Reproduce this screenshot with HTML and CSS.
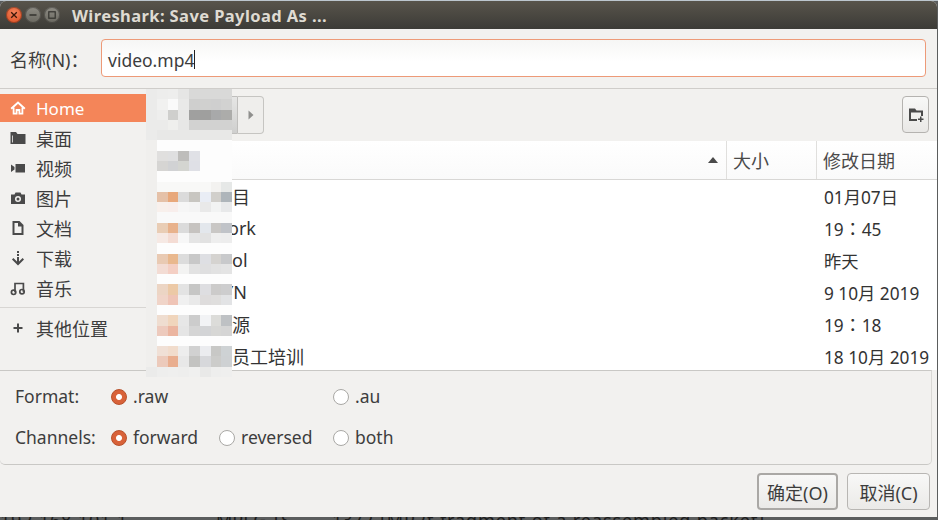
FILE: index.html
```html
<!DOCTYPE html>
<html lang="zh">
<head>
<meta charset="utf-8">
<title>Wireshark: Save Payload As ...</title>
<link rel="stylesheet" href="styles.css">
</head>
<body>
<div class="top-edge"></div>
<div class="window">
  <header class="titlebar">
    <div class="controls">
      <span class="ctl ctl-close"><svg viewBox="0 0 8 8" width="8" height="8"><path d="M1.2 1.2 6.8 6.8M6.8 1.2 1.2 6.8" stroke="#3a1608" stroke-width="1.3"/></svg></span>
      <span class="ctl ctl-min"><svg viewBox="0 0 8 8" width="8" height="8"><path d="M0.5 4h7" stroke="#33322e" stroke-width="1.4"/></svg></span>
      <span class="ctl ctl-max"><svg viewBox="0 0 8 8" width="8" height="8"><rect x="0.8" y="0.8" width="6.4" height="6.4" fill="none" stroke="#33322e" stroke-width="1.2"/></svg></span>
    </div>
    <div class="title">Wireshark: Save Payload As ...</div>
  </header>

  <div class="name-row">
    <label class="name-label">名称(N)：</label>
    <div class="name-input">video.mp4<span class="caret"></span></div>
  </div>

  <div class="browser">
    <nav class="sidebar">
      <a class="place place-active">
        <svg class="ico" viewBox="0 0 16 16"><path d="M1.200 8.800 8 2.500l6.800 6.300" fill="none" stroke="#fff" stroke-width="2"/><path d="M3.600 7.500V13.600H6.600V10H9.400V13.600H12.400V7.500" fill="none" stroke="#fff" stroke-width="1.800"/></svg>
        <span>Home</span>
      </a>
      <a class="place">
        <svg class="ico" viewBox="0 0 16 16"><path d="M0.500 2h5.500l1.500 2H15.500v10H.5zM2.200 5.500V12.500H3V5.500z" fill="#4a4a4a" fill-rule="evenodd"/></svg>
        <span>桌面</span>
      </a>
      <a class="place">
        <svg class="ico" viewBox="0 0 16 16"><path d="M5.500 4H15v8.500H5.500zM1 4.500 4.500 7v2.500L1 12z" fill="#4a4a4a"/></svg>
        <span>视频</span>
      </a>
      <a class="place">
        <svg class="ico" viewBox="0 0 16 16"><path d="M5.500 2.500h5l1 2h3.500v9.500H1V4.500h3.500zM8 6a3 3 0 1 0 0 6 3 3 0 0 0 0-6zM8 7.500a1.500 1.500 0 1 1 0 3 1.500 1.500 0 0 1 0-3z" fill="#4a4a4a" fill-rule="evenodd"/></svg>
        <span>图片</span>
      </a>
      <a class="place">
        <svg class="ico" viewBox="0 0 16 16"><path d="M2.500 1H9.500L13.500 5V15H2.500zM4.500 3V13H11.500V6.500H8V3z" fill="#4a4a4a" fill-rule="evenodd"/></svg>
        <span>文档</span>
      </a>
      <a class="place">
        <svg class="ico" viewBox="0 0 16 16"><path d="M7 1h2v2H7zM7 4h2v2H7z" fill="#4a4a4a"/><path d="M8 7v6.500M2.700 8.800 8 14l5.300-5.200" fill="none" stroke="#4a4a4a" stroke-width="2"/></svg>
        <span>下载</span>
      </a>
      <a class="place">
        <svg class="ico" viewBox="0 0 16 16"><circle cx="3.600" cy="12.300" r="2.200" fill="none" stroke="#4a4a4a" stroke-width="1.700"/><circle cx="12" cy="11.700" r="2.200" fill="none" stroke="#4a4a4a" stroke-width="1.700"/><path d="M5 12.300V3.500h8.400v8.200" fill="none" stroke="#4a4a4a" stroke-width="1.700"/></svg>
        <span>音乐</span>
      </a>
      <div class="sidebar-sep"></div>
      <a class="place">
        <svg class="ico" viewBox="0 0 16 16"><path d="M7 3.500h2V7h3.500v2H9v3.500H7V9H3.500V7H7z" fill="#4a4a4a"/></svg>
        <span>其他位置</span>
      </a>
    </nav>

    <section class="files">
      <div class="toolbar">
        <div class="pathbar">
          <span class="crumb"></span>
          <span class="crumb-next"><svg viewBox="0 0 6 10" width="6" height="10"><path d="M0.500 0.500 5.500 5 0.500 9.500z" fill="#8f8f8d"/></svg></span>
        </div>
        <button class="icon-btn" type="button">
          <svg viewBox="0 0 16 16" width="16" height="16"><path d="M1 1.500h6l1.500 2H15V9h-2V5.500H3v6.500h6v2H1z" fill="#4a4a4a"/><path d="M12 9.500h1.500V11.500H15.500V13H13.500v2H12v-2H10V11.500h2z" fill="#4a4a4a"/></svg>
        </button>
      </div>
      <div class="table">
        <div class="thead cols">
          <div class="th th-name"><svg viewBox="0 0 12 6" width="12" height="6"><path d="M6 0 11 6H1z" fill="#4a4a4a"/></svg></div>
          <div class="th">大小</div>
          <div class="th">修改日期</div>
        </div>
        <div class="row cols"><div class="cell-name">目</div><div></div><div class="cell-date">01月07日</div></div>
        <div class="row cols"><div class="cell-name cell-name-ork">ork</div><div></div><div class="cell-date">19<span class="colon">：</span>45</div></div>
        <div class="row cols"><div class="cell-name">ol</div><div></div><div class="cell-date">昨天</div></div>
        <div class="row cols"><div class="cell-name cell-name-under">YN</div><div></div><div class="cell-date">9 10月 2019</div></div>
        <div class="row cols"><div class="cell-name">源</div><div></div><div class="cell-date">19<span class="colon">：</span>18</div></div>
        <div class="row cols"><div class="cell-name">员工培训</div><div></div><div class="cell-date">18 10月 2019</div></div>
      </div>
    </section>

    <svg class="mosaic" viewBox="0 0 8 28" preserveAspectRatio="none" shape-rendering="crispEdges" aria-hidden="true">
      <rect x="0" y="0" width="1" height="5" fill="#ebebea"/>
      <rect x="0" y="5" width="1" height="22" fill="#f0efed"/>
      <rect x="1" y="5" width="7" height="22" fill="#fdfdfd"/>
      <rect x="1" y="0" width="1" height="1" fill="#ededec"/><rect x="2" y="0" width="1" height="1" fill="#eeeeed"/><rect x="3" y="0" width="1" height="1" fill="#e6e6e5"/><rect x="4" y="0" width="4" height="1" fill="#d9d9d8"/>
      <rect x="1" y="1" width="1" height="1" fill="#f1f1f0"/><rect x="2" y="1" width="1" height="1" fill="#fafafa"/><rect x="3" y="1" width="1" height="1" fill="#e9e9e8"/><rect x="4" y="1" width="1" height="1" fill="#cfcfce"/><rect x="5" y="1" width="1" height="1" fill="#d0d0cf"/><rect x="6" y="1" width="1" height="1" fill="#cfcfcf"/><rect x="7" y="1" width="1" height="1" fill="#d2d2d1"/>
      <rect x="1" y="2" width="1" height="1" fill="#eeeeed"/><rect x="2" y="2" width="1" height="1" fill="#cfcfcd"/><rect x="3" y="2" width="1" height="1" fill="#e8e8e7"/><rect x="4" y="2" width="1" height="1" fill="#a0a09f"/><rect x="5" y="2" width="1" height="1" fill="#9f9f9e"/><rect x="6" y="2" width="1" height="1" fill="#a8a9aa"/><rect x="7" y="2" width="1" height="1" fill="#acacaa"/>
      <rect x="1" y="3" width="1" height="1" fill="#ebebea"/><rect x="2" y="3" width="1" height="1" fill="#efefed"/><rect x="3" y="3" width="1" height="1" fill="#e7e7e6"/><rect x="4" y="3" width="4" height="1" fill="#d2d2d1"/>
      <rect x="1" y="4" width="7" height="1" fill="#e8e8e7"/>
      <rect x="1" y="6" width="1" height="1" fill="#e0dfde"/><rect x="2" y="6" width="1" height="1" fill="#dfdfe0"/><rect x="3" y="6" width="1" height="1" fill="#bebdbb"/><rect x="4" y="6" width="1" height="1" fill="#e0e1e6"/>
      <rect x="1" y="7" width="1" height="1" fill="#d6d5d3"/><rect x="2" y="7" width="1" height="1" fill="#d1d2d4"/><rect x="3" y="7" width="1" height="1" fill="#d4d5d1"/><rect x="4" y="7" width="1" height="1" fill="#dfe0e6"/>
      <rect x="1" y="9" width="5" height="1" fill="#f8f8f7"/><rect x="6" y="9" width="1" height="1" fill="#f3f2f0"/><rect x="7" y="9" width="1" height="1" fill="#e6e8e7"/>
      <rect x="1" y="10" width="1" height="1" fill="#e5c1a8"/><rect x="2" y="10" width="1" height="1" fill="#e8a87b"/><rect x="3" y="10" width="1" height="1" fill="#dbdbdb"/><rect x="4" y="10" width="1" height="1" fill="#c8c6c1"/><rect x="5" y="10" width="1" height="1" fill="#e9edf5"/><rect x="6" y="10" width="1" height="1" fill="#d1cfcb"/><rect x="7" y="10" width="1" height="1" fill="#aeb5ba"/>
      <rect x="1" y="11" width="1" height="1" fill="#f8f0ec"/><rect x="2" y="11" width="1" height="1" fill="#f8eeec"/><rect x="3" y="11" width="1" height="1" fill="#f6f6f6"/><rect x="4" y="11" width="1" height="1" fill="#f4f4f4"/><rect x="5" y="11" width="1" height="1" fill="#e9e9e9"/><rect x="6" y="11" width="1" height="1" fill="#f2f3f3"/><rect x="7" y="11" width="1" height="1" fill="#e8e9ea"/>
      <rect x="1" y="12" width="7" height="1" fill="#f9f9f9"/>
      <rect x="1" y="13" width="1" height="1" fill="#e9cdb5"/><rect x="2" y="13" width="1" height="1" fill="#e8b28c"/><rect x="3" y="13" width="1" height="1" fill="#dbdbdb"/><rect x="4" y="13" width="1" height="1" fill="#c6c3c0"/><rect x="5" y="13" width="1" height="1" fill="#e3e7ec"/><rect x="6" y="13" width="1" height="1" fill="#c9c7c5"/><rect x="7" y="13" width="1" height="1" fill="#c0c3c8"/>
      <rect x="1" y="14" width="1" height="1" fill="#f6e9e4"/><rect x="2" y="14" width="1" height="1" fill="#f4dcd4"/><rect x="3" y="14" width="1" height="1" fill="#f7f7f7"/><rect x="4" y="14" width="1" height="1" fill="#e5e5e5"/><rect x="5" y="14" width="1" height="1" fill="#e2e2e2"/><rect x="6" y="14" width="1" height="1" fill="#eeeeee"/><rect x="7" y="14" width="1" height="1" fill="#ededed"/>
      <rect x="1" y="16" width="1" height="1" fill="#e9cab3"/><rect x="2" y="16" width="1" height="1" fill="#e9b88e"/><rect x="3" y="16" width="1" height="1" fill="#dcdcdc"/><rect x="4" y="16" width="1" height="1" fill="#c8c8c8"/><rect x="5" y="16" width="1" height="1" fill="#dedfe3"/><rect x="6" y="16" width="1" height="1" fill="#d5d3d0"/><rect x="7" y="16" width="1" height="1" fill="#c8c9cb"/>
      <rect x="1" y="17" width="1" height="1" fill="#f3dcd4"/><rect x="2" y="17" width="1" height="1" fill="#f4cfc4"/><rect x="3" y="17" width="1" height="1" fill="#f3f3f2"/><rect x="4" y="17" width="1" height="1" fill="#e2e2e2"/><rect x="5" y="17" width="1" height="1" fill="#dfdfe0"/><rect x="6" y="17" width="1" height="1" fill="#e2e2e2"/><rect x="7" y="17" width="1" height="1" fill="#e4e4e4"/>
      <rect x="1" y="19" width="1" height="1" fill="#ecd5c4"/><rect x="2" y="19" width="1" height="1" fill="#ecc9a6"/><rect x="3" y="19" width="1" height="1" fill="#e3e3e3"/><rect x="4" y="19" width="1" height="1" fill="#c6c6c5"/><rect x="5" y="19" width="1" height="1" fill="#dedee1"/><rect x="6" y="19" width="1" height="1" fill="#cccbca"/><rect x="7" y="19" width="1" height="1" fill="#cdcdce"/>
      <rect x="1" y="20" width="1" height="1" fill="#f0d4c8"/><rect x="2" y="20" width="1" height="1" fill="#efc4b6"/><rect x="3" y="20" width="1" height="1" fill="#f0f0f0"/><rect x="4" y="20" width="1" height="1" fill="#e9e9e9"/><rect x="5" y="20" width="1" height="1" fill="#dedcdc"/><rect x="6" y="20" width="1" height="1" fill="#dfdedd"/><rect x="7" y="20" width="1" height="1" fill="#e2e3e5"/>
      <rect x="1" y="22" width="1" height="1" fill="#efddd0"/><rect x="2" y="22" width="1" height="1" fill="#f0d5bc"/><rect x="3" y="22" width="1" height="1" fill="#e7e7e7"/><rect x="4" y="22" width="1" height="1" fill="#cccccc"/><rect x="5" y="22" width="1" height="1" fill="#f2f3f5"/><rect x="6" y="22" width="1" height="1" fill="#dcdcd9"/><rect x="7" y="22" width="1" height="1" fill="#bec1c4"/>
      <rect x="1" y="23" width="1" height="1" fill="#edcabd"/><rect x="2" y="23" width="1" height="1" fill="#ebb5a0"/><rect x="3" y="23" width="1" height="1" fill="#e5e5e5"/><rect x="4" y="23" width="1" height="1" fill="#d5d5d5"/><rect x="5" y="23" width="1" height="1" fill="#d3d4d6"/><rect x="6" y="23" width="1" height="1" fill="#d7d7d5"/><rect x="7" y="23" width="1" height="1" fill="#d5d5d5"/>
      <rect x="1" y="25" width="1" height="1" fill="#f0e0d6"/><rect x="2" y="25" width="1" height="1" fill="#f1dccc"/><rect x="3" y="25" width="1" height="1" fill="#ededed"/><rect x="4" y="25" width="1" height="1" fill="#d1d1d1"/><rect x="5" y="25" width="1" height="1" fill="#ebecef"/><rect x="6" y="25" width="1" height="1" fill="#c8c8c6"/><rect x="7" y="25" width="1" height="1" fill="#ced2d4"/>
      <rect x="1" y="26" width="1" height="1" fill="#eccabb"/><rect x="2" y="26" width="1" height="1" fill="#e9ae8f"/><rect x="3" y="26" width="1" height="1" fill="#e8e8e8"/><rect x="4" y="26" width="1" height="1" fill="#c3c3c1"/><rect x="5" y="26" width="1" height="1" fill="#d7d8db"/><rect x="6" y="26" width="1" height="1" fill="#ccccca"/><rect x="7" y="26" width="1" height="1" fill="#ced1d3"/>
      <rect x="0" y="27" width="1" height="1" fill="#ebebea"/><rect x="1" y="27" width="1" height="1" fill="#eeeeed"/><rect x="2" y="27" width="1" height="1" fill="#efefee"/><rect x="3" y="27" width="1" height="1" fill="#eeeeed"/><rect x="4" y="27" width="1" height="1" fill="#f0f0ef"/><rect x="5" y="27" width="1" height="1" fill="#e9e9e8"/><rect x="6" y="27" width="1" height="1" fill="#eeeeed"/><rect x="7" y="27" width="1" height="1" fill="#efefee"/>
    </svg>
  </div>

  <div class="options">
    <div class="opt-label">Format:</div>
    <label class="radio"><span class="dot dot-on"></span>.raw</label>
    <span></span>
    <label class="radio"><span class="dot"></span>.au</label>
    <div class="opt-label">Channels:</div>
    <label class="radio"><span class="dot dot-on"></span>forward</label>
    <label class="radio"><span class="dot"></span>reversed</label>
    <label class="radio"><span class="dot"></span>both</label>
  </div>

  <footer class="actions">
    <button class="btn btn-default" type="button">确定(O)</button>
    <button class="btn" type="button">取消(C)</button>
  </footer>
</div>
<div class="behind">
  <div class="behind-row">
    <span class="b-ip">192.168.101.1</span>
    <span class="b-proto">MPEG TS</span>
    <span class="b-len">1372</span>
    <span class="b-info">[MP2t fragment of a reassembled packet]</span>
  </div>
</div>
</body>
</html>
```
FILE: styles.css
```css
* { box-sizing: border-box; }
html, body { margin: 0; height: 520px; overflow: hidden; }
body {
  background: #5b5d5d;
  font-family: "Noto Sans", "Noto Sans CJK SC", sans-serif;
  font-size: 18px;
  color: #3d3d3d;
}
.top-edge { height: 1px; background: #bcc6ce; }
.window {
  width: 937px;
  height: 516px;
  background: #f2f1ef;
  border-radius: 6px 6px 0 0;
  display: flex;
  flex-direction: column;
  overflow: hidden;
  position: relative;
}

/* title bar */
.titlebar {
  height: 28px;
  flex: none;
  display: flex;
  align-items: center;
  padding-left: 6px;
  background: linear-gradient(#58544b, #3c3b37);
}
.controls { display: flex; gap: 3px; align-items: center; width: 66px; }
.ctl {
  width: 16px; height: 16px; border-radius: 50%;
  display: flex; align-items: center; justify-content: center;
  box-shadow: inset 0 0 0 1px rgba(0,0,0,.3);
}
.ctl-close { background: radial-gradient(circle at 50% 35%, #f4845c, #d8481c); }
.ctl-min, .ctl-max { background: linear-gradient(#8e8c84, #6a6860); }
.title { color: #dfdbd2; font-weight: 700; font-size: 16.5px; letter-spacing: .4px; white-space: nowrap; }

/* name */
.name-row {
  height: 60px;
  flex: none;
  display: flex;
  align-items: center;
  padding: 0 11px 1px 10px;
  border-bottom: 1px solid #cfcdca;
}
.name-label { width: 91px; flex: none; padding-top: 2px; }
.name-input {
  flex: 1;
  height: 38px;
  border: 1px solid #ed9a78;
  border-radius: 4px;
  background: linear-gradient(#f6f6f5, #fff 60%);
  padding: 3px 6px 0;
  display: flex;
  align-items: center;
  font-size: 17.5px;
}
.caret { width: 1px; height: 19px; background: #222; }

/* browser */
.browser { flex: none; height: 281px; display: flex; position: relative; }
.sidebar { width: 146px; flex: none; padding-top: 5px; }
.place {
  height: 30px;
  display: flex;
  align-items: center;
  gap: 10px;
  padding-left: 10px;
}
.place-active { height: 28px; margin-bottom: 1px; background: #f48559; color: #fff; font-size: 17px; }
.ico { width: 16px; height: 16px; flex: none; }
.sidebar-sep { height: 1px; background: #d8d6d3; margin: 4px 0 5px; }
.files { flex: 1; display: flex; flex-direction: column; min-width: 0; }
.toolbar {
  height: 52px;
  flex: none;
  display: flex;
  justify-content: space-between;
  padding: 7px 8px 0 0;
}
.pathbar { display: flex; height: 38px; width: 118px; }
.crumb {
  width: 92px;
  background: linear-gradient(#e6e6e5, #cfcfce);
  border: 1px solid #c0bfbd;
  border-radius: 4px 0 0 4px;
}
.crumb-next {
  width: 26px;
  display: flex; align-items: center; justify-content: center;
  background: #efeeec;
  border: 1px solid #c6c5c2;
  border-left: 0;
  border-radius: 0 4px 4px 0;
}
.icon-btn {
  width: 27px; height: 37px; padding: 0;
  display: flex; align-items: center; justify-content: center;
  background: linear-gradient(#f8f8f7, #e9e8e6);
  border: 1px solid #b5b3b0;
  border-radius: 4px;
}
.table { flex: 1; background: #fff; overflow: hidden; }
.cols { display: grid; grid-template-columns: 580px 90px 1fr; }
.thead { height: 39px; border-bottom: 1px solid #d8d7d5; background: linear-gradient(#fff, #fafafa); }
.th { display: flex; align-items: center; padding-left: 6px; border-left: 1px solid #e0dfdd; color: #4a4a4a; }
.th-name { border-left: 0; justify-content: flex-end; padding: 0 7px 0 0; }
.row { height: 32px; align-items: center; color: #333; white-space: nowrap; font-size: 17.25px; }
.cell-name { padding-left: 86px; font-size: 18px; }
.cell-name-ork { padding-left: 82px; }
.cell-name-under { padding-left: 77px; }
.cell-date { padding-left: 8px; }
.colon { font-family: "Noto Sans CJK TC", sans-serif; font-size: 18px; }
.mosaic { position: absolute; left: 146px; top: 0; width: 86px; height: 288px; z-index: 2; }

/* options */
.options {
  flex: none;
  height: 95px;
  width: 932px;
  border-top: 1px solid #c9c8c5;
  border-bottom: 1px solid #c9c8c5;
  border-right: 1px solid #d9d8d5;
  border-radius: 0 0 5px 5px;
  display: grid;
  grid-template-columns: 96px 108px 114px 1fr;
  grid-template-rows: 42px 40px;
  align-content: start;
  padding: 5px 0 0 15px;
  align-items: center;
  font-size: 17.5px;
}
.opt-label { padding-bottom: 2px; }
.radio { display: flex; align-items: center; gap: 6px; padding-bottom: 2px; }
.dot {
  width: 16px; height: 16px; border-radius: 50%; flex: none;
  margin-top: 2px;
  background: #fff; border: 1px solid #a9a8a5;
}
.dot-on {
  border-color: #b8502a;
  background: radial-gradient(circle, #fff 0 2.500px, #d9633a 3.500px, #d65f36 100%);
}

/* actions */
.actions { flex: 1; display: flex; justify-content: flex-end; gap: 9px; padding: 8px 7px 0 0; }
.btn {
  height: 37px; padding: 0;
  font: inherit; color: #3d3d3d;
  width: 83px;
  background: linear-gradient(#f8f8f7, #ebeae8);
  border: 1px solid #b8b6b3;
  border-radius: 4px;
}
.btn-default { width: 81px; border: 2px solid #aaa8a5; }

/* window behind the dialog */
.behind { height: 3px; overflow: hidden; }
.behind-row {
  display: flex; margin-top: -8px; line-height: 22px; color: #1c1c1c;
  white-space: nowrap; font-size: 18px;
}
.b-ip { width: 216px; letter-spacing: .8px; }
.b-proto { width: 116px; }
.b-len { width: 48px; }
.b-info { letter-spacing: .9px; }
```
